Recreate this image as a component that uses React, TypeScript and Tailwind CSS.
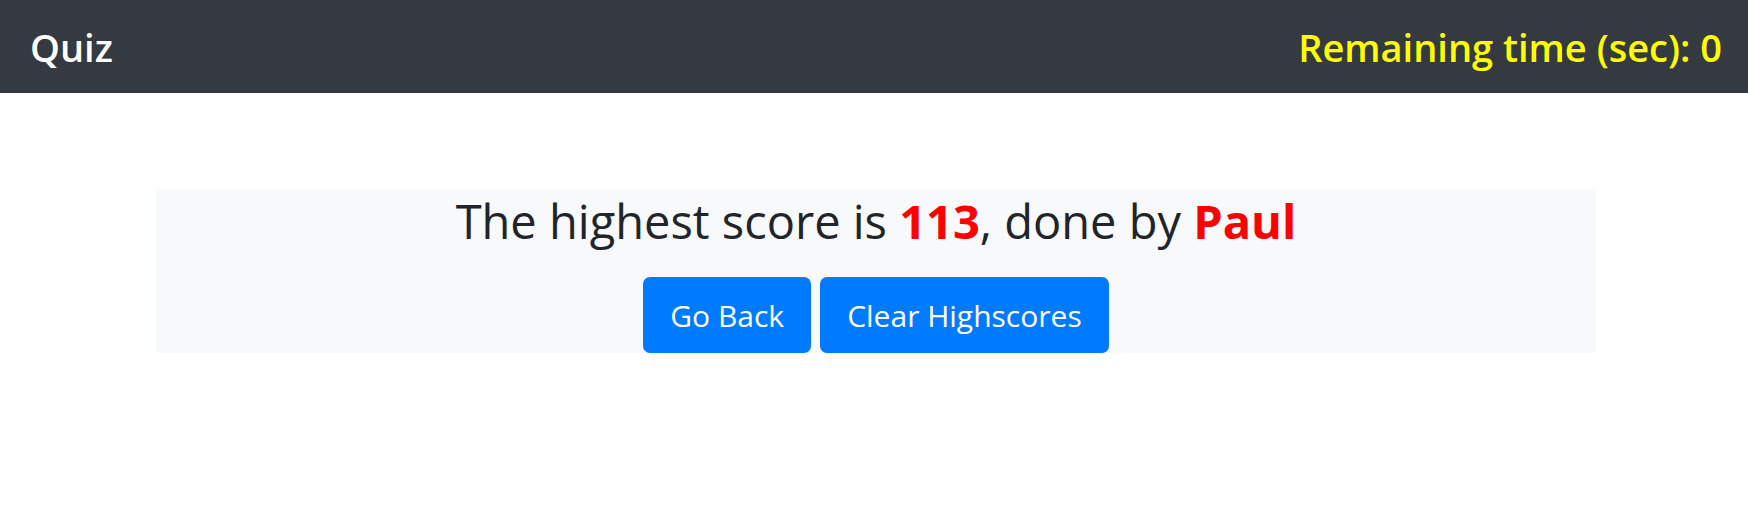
export default function App() {
  return (
    <div className="min-h-[531px] bg-white" style={{ fontFamily: '"Open Sans", "Noto Sans", sans-serif' }}>
      <nav className="flex h-[93px] items-center justify-between bg-[#343a40] pl-[30px] pr-[26px]">
        <span className="text-[38px] font-semibold leading-none text-white">Quiz</span>
        <span className="text-[38px] font-semibold leading-none text-[#ffff00]">Remaining time (sec): 0</span>
      </nav>
      <div className="ml-[156px] mt-[96px] flex w-[1440px] flex-col items-center bg-[#f8f9fa]">
        <h1 className="mt-[4px] text-[47px] leading-[1.2] text-[#212529]">
          The highest score is <span className="font-bold text-[#ff0000]">113</span>, done by{' '}
          <span className="font-bold text-[#ff0000]">Paul</span>
        </h1>
        <div className="mt-[28px] flex w-full justify-center gap-[9px]">
          <button className="h-[76px] rounded-[7px] bg-[#007bff] px-[27px] text-[30px] text-white">Go Back</button>
          <button className="h-[76px] rounded-[7px] bg-[#007bff] px-[27px] text-[30px] text-white">Clear Highscores</button>
        </div>
      </div>
    </div>
  );
}
